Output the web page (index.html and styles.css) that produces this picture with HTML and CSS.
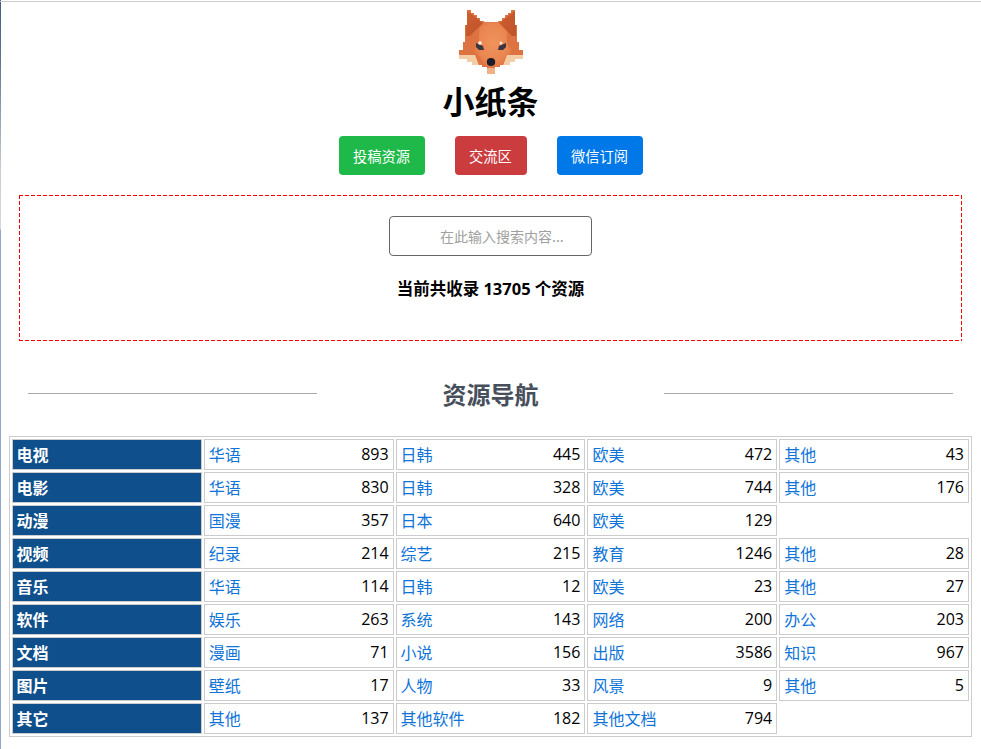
FILE: index.html
```html
<!DOCTYPE html>
<html lang="zh-CN">
<head>
<meta charset="utf-8">
<title>小纸条</title>
<link rel="stylesheet" href="styles.css">
</head>
<body>
<header class="head">
  <svg class="logo" viewBox="0 0 64 64" width="64" height="64">
    <defs>
      <radialGradient id="face" cx="50%" cy="45%" r="55%"><stop offset="0" stop-color="#f0935c"/><stop offset=".7" stop-color="#ea8550"/><stop offset="1" stop-color="#dc7040"/></radialGradient>
      <linearGradient id="earL" x1="0" y1="0" x2="1" y2="1"><stop offset="0" stop-color="#d0602f"/><stop offset="1" stop-color="#bd522b"/></linearGradient>
      <clipPath id="outline"><polygon points="8,0 12,0 12,3 15,3 15,5 18,5 18,8 21,8 21,11 25,11 25,12 39,12 39,11 43,11 43,8 46,8 46,5 49,5 49,3 52,3 52,0 56,0 56,15 58,15 58,32 60,32 60,40 64,40 64,49 56,49 56,52 51,52 51,55 41,55 41,57 36,57 36,64 28,64 28,57 23,57 23,55 13,55 13,52 8,52 8,49 0,49 0,40 4,40 4,32 6,32 6,15 8,15"/></clipPath>
      <filter id="soft" x="-10%" y="-10%" width="120%" height="120%"><feGaussianBlur stdDeviation=".7"/></filter>
    </defs>
    <g clip-path="url(#outline)">
      <rect width="64" height="64" fill="#dd7340"/>
      <g filter="url(#soft)">
        <path fill="url(#face)" d="M24 11h16l8 9v14l6 8-6 4-6 10-8 4-8-4-6-10-6-4 6-8v-14z"/>
        <path fill="url(#earL)" d="M7 0l17 13-13 13-4 0z"/>
        <path fill="url(#earL)" d="M57 0l-17 13 13 13 4 0z"/>
        <path fill="#f3cda6" d="M-2 45h18l5 13-8-3-8-3-8-2z"/>
        <path fill="#f3cda6" d="M66 45h-18l-5 13 8-3 8-3 8-2z"/>
        <path fill="#f0b088" d="M27 58h10v7h-10z"/>
        <path fill="#3b3540" d="M17 33l7 3 1 4-5 0-3-3z"/>
        <path fill="#3b3540" d="M47 33l-7 3-1 4 5 0 3-3z"/>
        <circle cx="21" cy="33" r="1.800" fill="#fff4e8"/>
        <circle cx="42" cy="33" r="1.500" fill="#fbe6d2"/>
        <ellipse cx="32" cy="52" rx="4.200" ry="4" fill="#1f1f29"/>
      </g>
    </g>
  </svg>
  <h1 class="title">小纸条</h1>
  <nav class="actions">
    <a class="btn btn-green" href="#">投稿资源</a>
    <a class="btn btn-red" href="#">交流区</a>
    <a class="btn btn-blue" href="#">微信订阅</a>
  </nav>
</header>
<section class="search">
  <input class="search-input" type="text" placeholder="在此输入搜索内容...">
  <p class="count">当前共收录 13705 个资源</p>
</section>
<div class="divider">
  <span class="rule"></span>
  <h2 class="divider-title">资源导航</h2>
  <span class="rule"></span>
</div>
<table class="nav">
  <tbody>
    <tr><th>电视</th><td><a href="#">华语</a><span>893</span></td><td><a href="#">日韩</a><span>445</span></td><td><a href="#">欧美</a><span>472</span></td><td><a href="#">其他</a><span>43</span></td></tr>
    <tr><th>电影</th><td><a href="#">华语</a><span>830</span></td><td><a href="#">日韩</a><span>328</span></td><td><a href="#">欧美</a><span>744</span></td><td><a href="#">其他</a><span>176</span></td></tr>
    <tr><th>动漫</th><td><a href="#">国漫</a><span>357</span></td><td><a href="#">日本</a><span>640</span></td><td><a href="#">欧美</a><span>129</span></td><td class="empty"></td></tr>
    <tr><th>视频</th><td><a href="#">纪录</a><span>214</span></td><td><a href="#">综艺</a><span>215</span></td><td><a href="#">教育</a><span>1246</span></td><td><a href="#">其他</a><span>28</span></td></tr>
    <tr><th>音乐</th><td><a href="#">华语</a><span>114</span></td><td><a href="#">日韩</a><span>12</span></td><td><a href="#">欧美</a><span>23</span></td><td><a href="#">其他</a><span>27</span></td></tr>
    <tr><th>软件</th><td><a href="#">娱乐</a><span>263</span></td><td><a href="#">系统</a><span>143</span></td><td><a href="#">网络</a><span>200</span></td><td><a href="#">办公</a><span>203</span></td></tr>
    <tr><th>文档</th><td><a href="#">漫画</a><span>71</span></td><td><a href="#">小说</a><span>156</span></td><td><a href="#">出版</a><span>3586</span></td><td><a href="#">知识</a><span>967</span></td></tr>
    <tr><th>图片</th><td><a href="#">壁纸</a><span>17</span></td><td><a href="#">人物</a><span>33</span></td><td><a href="#">风景</a><span>9</span></td><td><a href="#">其他</a><span>5</span></td></tr>
    <tr><th>其它</th><td><a href="#">其他</a><span>137</span></td><td><a href="#">其他软件</a><span>182</span></td><td><a href="#">其他文档</a><span>794</span></td><td class="empty"></td></tr>
  </tbody>
</table>
</body>
</html>
```
FILE: styles.css
```css
* { box-sizing: border-box; }
html {
  height: 100%;
  overflow: hidden;
  background: linear-gradient(#3f5f80 0, #5a7690 60px, #c8ccd4 170px, #d4d8de 229px, #8fa8c8 230px, #8fa8c8 100%) left top / 1px 100% no-repeat #fff;
}
body {
  margin: 1px 0 0 0;
  padding: 0;
  border-top: 1px solid #ccc;
  height: 748px;
  overflow: hidden;
  font-family: "Open Sans", "Noto Sans CJK SC", sans-serif;
  color: #000;
  font-size: 16px;
}
.head { display: flex; flex-direction: column; align-items: center; padding-top: 8px; }
.logo { display: block; }
.title {
  margin: 2px 0 0;
  font-size: 32px;
  line-height: 48px;
  font-weight: 700;
  font-family: "Noto Sans CJK SC", sans-serif;
}
.actions { display: flex; justify-content: center; gap: 30px; margin-top: 12px; }
.btn {
  display: block;
  height: 39px;
  padding: 0 14.400px;
  border-radius: 4px;
  color: #fff;
  font-size: 14.250px;
  line-height: 39px;
  text-align: center;
  text-decoration: none;
  font-family: "Noto Sans CJK SC", sans-serif;
}
.btn-green { background: #1eb949; width: 86px; }
.btn-red { background: #cb3c3f; width: 72px; }
.btn-blue { background: #0078e7; width: 86px; }
.search {
  margin: 20px 19px 0;
  height: 146px;
  background:
    repeating-linear-gradient(90deg, #f00 0 4px, transparent 4px 6px) left top / 100% 1px no-repeat,
    repeating-linear-gradient(90deg, #f00 0 4px, transparent 4px 6px) left bottom / 100% 1px no-repeat,
    repeating-linear-gradient(#f00 0 4px, transparent 4px 6px) left top / 1px 100% no-repeat,
    repeating-linear-gradient(#f00 0 4px, transparent 4px 6px) right top / 1px 100% no-repeat;
  display: flex;
  flex-direction: column;
  align-items: center;
  padding-top: 21px;
}
.search-input {
  width: 203px;
  height: 40px;
  border: 1px solid #666;
  border-radius: 4px;
  padding: 0 10px 0 50px;
  font-size: 14px;
  font-family: "Noto Sans CJK SC", sans-serif;
  background: #fff;
}
.search-input::placeholder { color: #a0a0a0; opacity: 1; }
.count {
  margin: 20px 0 0;
  font-size: 16.500px;
  line-height: 26px;
  font-weight: 700;
}
.divider {
  display: flex;
  align-items: center;
  margin: 35px 28px 0;
  height: 36px;
}
.rule { flex: 1; height: 1px; background: #aaa; margin-bottom: 2px; }
.divider-title {
  margin: 0;
  width: 347px;
  text-align: center;
  font-size: 24px;
  line-height: 36px;
  font-weight: 700;
  color: #484f5c;
  font-family: "Noto Sans CJK SC", sans-serif;
}
.nav {
  margin: 24px 0 0 9px;
  width: 963px;
  table-layout: fixed;
  border-collapse: separate;
  border-spacing: 2px;
  border: 1px solid #ccc;
}
.nav th, .nav td {
  height: 31px;
  padding: 0 4px 1px;
  border: 1px solid #ccc;
  font-size: 16px;
  line-height: 20px;
  vertical-align: middle;
}
.nav th {
  background: #0f4f8b;
  color: #fff;
  text-align: left;
  font-weight: 700;
  padding-bottom: 2px;
  padding-left: 3.500px;
  font-family: "Noto Sans CJK SC", sans-serif;
}
.nav td span { float: right; }
.nav td a { color: #0f74d8; text-decoration: none; font-family: "Noto Sans CJK SC", sans-serif; }
.nav td.empty { border-color: transparent; }
```
